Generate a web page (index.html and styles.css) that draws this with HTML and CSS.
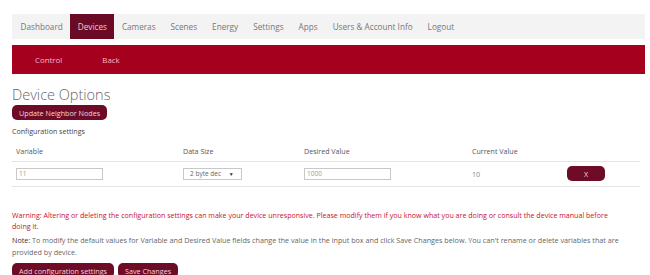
FILE: index.html
```html
<!DOCTYPE html>
<html lang="en">
<head>
    <meta charset="UTF-8">
    <title>Device Options</title>
    <link rel="stylesheet" href="styles.css">
</head>
<body>

<div class="page">
    <ul class="nav">
        <li>Dashboard</li>
        <li class="active">Devices</li>
        <li>Cameras</li>
        <li>Scenes</li>
        <li>Energy</li>
        <li>Settings</li>
        <li>Apps</li>
        <li>Users &amp; Account Info</li>
        <li>Logout</li>
    </ul>

    <div class="subnav">
        <span>Control</span>
        <span>Back</span>
    </div>

    <h1>Device Options</h1>
    <button class="btn btn-block">Update Neighbor Nodes</button>

    <div class="config-title">Configuration settings</div>
    <table class="config">
        <colgroup>
            <col style="width: 167px">
            <col style="width: 121px">
            <col style="width: 168px">
            <col style="width: 95px">
            <col>
        </colgroup>
        <thead>
            <tr>
                <th>Variable</th>
                <th>Data Size</th>
                <th>Desired Value</th>
                <th>Current Value</th>
                <th></th>
            </tr>
        </thead>
        <tbody>
            <tr>
                <td><input type="text" class="field" value="11"></td>
                <td><div class="select">2 byte dec <span class="arrow">&#9660;</span></div></td>
                <td><input type="text" class="field" value="1000"></td>
                <td class="cur">10</td>
                <td><button class="btn btn-block btn-x">X</button></td>
            </tr>
        </tbody>
    </table>

    <p class="warning">Warning: Altering or deleting the configuration settings can make your device unresponsive. Please modify them if you know what you are doing or consult the device manual before doing it.</p>
    <p class="note"><strong>Note:</strong> To modify the default values for Variable and Desired Value fields change the value in the input box and click Save Changes below. You can't rename or delete variables that are provided by device.</p>

    <div class="actions">
        <button class="btn">Add configuration settings</button>
        <button class="btn">Save Changes</button>
    </div>
</div>

</body>
</html>
```

FILE: styles.css
```css
body {
    font-family: "Open Sans", Arial, sans-serif;
    margin: 0;
    background-color: white;
    color: #555;
}
.page {
    padding: 14px 5px 0 12px;
}
.nav {
    list-style: none;
    margin: 0;
    padding: 0 0 0 1px;
    display: flex;
    height: 25px;
    background-color: #f3f3f3;
    font-size: 8.2px;
}
.nav li {
    padding: 0 7.5px;
    line-height: 25px;
    color: #777;
}
.nav li.active {
    background-color: #6b0a24;
    color: #f0c8d0;
}
.subnav {
    margin-top: 6px;
    height: 29px;
    background-color: #a6001f;
    display: flex;
    align-items: center;
    font-size: 7.9px;
    color: #f3b8c4;
}
.subnav span {
    margin-left: 23px;
    margin-right: 17px;
}
h1 {
    margin: 11px 0 1px 0;
    font-size: 14.5px;
    line-height: 19px;
    font-weight: 300;
    color: #666;
}
.btn {
    font-family: "Open Sans", Arial, sans-serif;
    background-color: #6e0b27;
    color: #f3d6dc;
    border: none;
    border-radius: 5px;
    font-size: 7.2px;
    height: 15px;
    padding: 0 7px;
}
.btn-block {
    display: block;
}
.config-title {
    margin-top: 6px;
    font-size: 7.1px;
    line-height: 11px;
    color: #444;
}
.config {
    width: 628px;
    table-layout: fixed;
    border-collapse: collapse;
    font-size: 7.1px;
}
.config th {
    text-align: left;
    font-weight: normal;
    color: #555;
    line-height: 11px;
    padding: 9px 4px 4px 4px;
    border-bottom: 1px solid #e4e4e4;
}
.config td {
    padding: 4px 4px 5px 4px;
    border-bottom: 1px solid #e4e4e4;
    vertical-align: middle;
}
.field {
    font-family: "Open Sans", Arial, sans-serif;
    display: block;
    width: 87px;
    height: 12px;
    box-sizing: border-box;
    border: 1px solid #c8c8c8;
    font-size: 6.5px;
    color: #999;
    padding: 0 2px;
}
.select {
    width: 59px;
    height: 12px;
    box-sizing: border-box;
    border: 1px solid #c8c8c8;
    font-size: 6.5px;
    color: #666;
    padding-left: 6px;
    line-height: 10px;
}
.arrow {
    font-size: 5px;
    margin-left: 6px;
    color: #333;
}
.cur {
    color: #888;
}
.btn-x {
    width: 38px;
}
.warning {
    margin: 23px 18px 0 0;
    font-size: 7.1px;
    line-height: 11px;
    color: #c8102e;
}
.note {
    margin: 2px 0 0 0;
    font-size: 7.2px;
    line-height: 12px;
    color: #666;
}
.note strong {
    font-weight: normal;
    color: #333;
}
.actions {
    margin-top: 5px;
    display: flex;
    gap: 4px;
}
```
